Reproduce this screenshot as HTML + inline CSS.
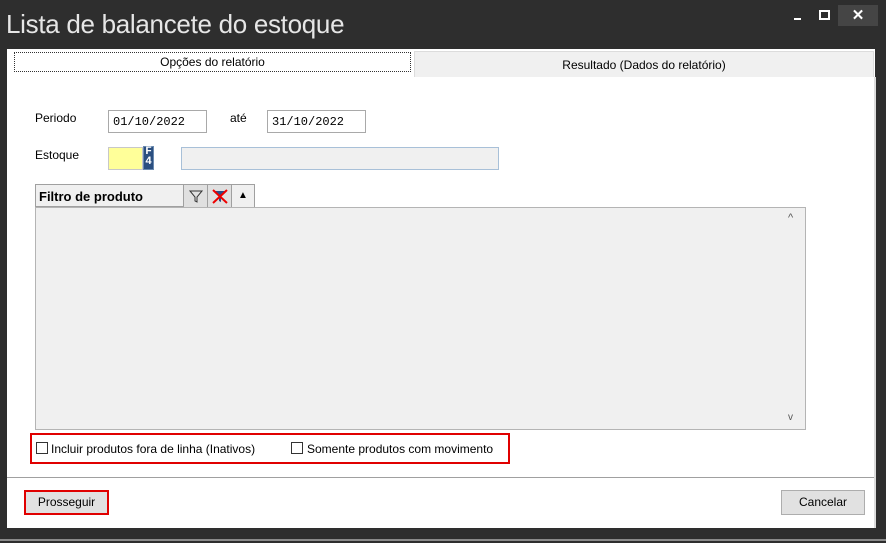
<!DOCTYPE html>
<html><head><meta charset="utf-8"><style>
*{margin:0;padding:0;box-sizing:border-box}
body{width:886px;height:543px;background:#2e2e2e;position:relative;overflow:hidden;font-family:"Liberation Sans",sans-serif;font-size:12px;color:#000}
.a{position:absolute}
.title{left:6px;top:9px;color:#e6e6e6;font-size:26px;letter-spacing:-0.3px}
.panel{left:7px;top:49px;width:868px;height:479px;background:#fff}
.inp{background:#fff;border:1px solid #a9a9a9;font-family:"Liberation Mono",monospace;font-size:12px;padding:4px 0 0 4px}
.btn{background:#e1e1e1;border:1px solid #adadad;text-align:center;font-size:12px}
.cb{width:12px;height:12px;border:1px solid #333;background:#fff}
</style></head><body>
<div class="a title">Lista de balancete do estoque</div>
<div class="a" style="left:794px;top:18px;width:7px;height:2px;background:#fff"></div>
<div class="a" style="left:819px;top:10px;width:11px;height:10px;border:2px solid #fff"></div>
<div class="a" style="left:838px;top:5px;width:40px;height:21px;background:#454545;color:#fff;font-size:15px;font-weight:bold;text-align:center;line-height:21px">✕</div>
<div class="a panel"></div>
<div class="a" style="left:414px;top:51px;width:460px;height:26px;background:#f0f0f0;border:1px solid #dcdcdc;border-bottom:none;text-align:center;line-height:27px">Resultado (Dados do relatório)</div>
<div class="a" style="left:874px;top:77px;width:2px;height:451px;background:#dcdcdc"></div>
<div class="a" style="left:14px;top:52px;width:397px;height:20px;border:1px dotted #333;text-align:center;line-height:19px">Opções do relatório</div>
<div class="a" style="left:35px;top:111px">Periodo</div>
<div class="a inp" style="left:108px;top:110px;width:99px;height:23px">01/10/2022</div>
<div class="a" style="left:230px;top:111px">até</div>
<div class="a inp" style="left:267px;top:110px;width:99px;height:23px">31/10/2022</div>
<div class="a" style="left:35px;top:148px">Estoque</div>
<div class="a" style="left:108px;top:147px;width:35px;height:23px;background:#ffff99;border:1px solid #c8c8c8"></div>
<div class="a" style="left:143px;top:146px;width:11px;height:24px;background:#2b4f80;border:1px solid #6a8ab0;color:#fff;font-size:11px;font-weight:bold;line-height:10px;text-align:center;font-family:'Liberation Mono',monospace">F<br>4</div>
<div class="a" style="left:181px;top:147px;width:318px;height:23px;background:#f0f0f0;border:1px solid #a8c0d8"></div>
<div class="a" style="left:35px;top:184px;width:220px;height:23px;background:#f0f0f0;border:1px solid #a0a0a0"></div>
<div class="a" style="left:39px;top:189px;font-weight:bold;font-size:13px">Filtro de produto</div>
<div class="a" style="left:183px;top:185px;width:24px;height:22px;background:#e0e0e0;border-left:1px solid #a0a0a0"><svg width="24" height="22"><path d="M6 6h12l-5 6v5l-2-1v-4z" fill="none" stroke="#333"/></svg></div>
<div class="a" style="left:207px;top:185px;width:24px;height:22px;background:#e0e0e0;border-left:1px solid #a0a0a0"><svg width="24" height="22"><path d="M6 6h12l-5 6v5l-2-1v-4z" fill="#2a4f8a"/><path d="M5 5l14 13M19 5L5 18" stroke="#e00" stroke-width="2"/></svg></div>
<div class="a" style="left:231px;top:185px;width:23px;height:22px;background:#f0f0f0;border-left:1px solid #a0a0a0;text-align:center;font-size:10px;line-height:22px">▲</div>
<div class="a" style="left:35px;top:207px;width:771px;height:223px;background:#f0f0f0;border:1px solid #b4b4b4"></div>
<div class="a" style="left:788px;top:212px;color:#555;font-size:11px">^</div>
<div class="a" style="left:788px;top:412px;color:#555;font-size:10px">v</div>
<div class="a" style="left:30px;top:433px;width:480px;height:31px;border:2px solid #e00000"></div>
<div class="a cb" style="left:36px;top:442px"></div>
<div class="a" style="left:51px;top:442px">Incluir produtos fora de linha (Inativos)</div>
<div class="a cb" style="left:291px;top:442px"></div>
<div class="a" style="left:307px;top:442px">Somente produtos com movimento</div>
<div class="a" style="left:7px;top:477px;width:867px;height:1px;background:#a0a0a0"></div>
<div class="a btn" style="left:24px;top:490px;width:85px;height:25px;border:2px solid #e00000;line-height:21px">Prosseguir</div>
<div class="a btn" style="left:781px;top:490px;width:84px;height:25px;line-height:23px">Cancelar</div>
<div class="a" style="left:0;top:539px;width:886px;height:2px;background:#8a8a8a"></div>
</body></html>
